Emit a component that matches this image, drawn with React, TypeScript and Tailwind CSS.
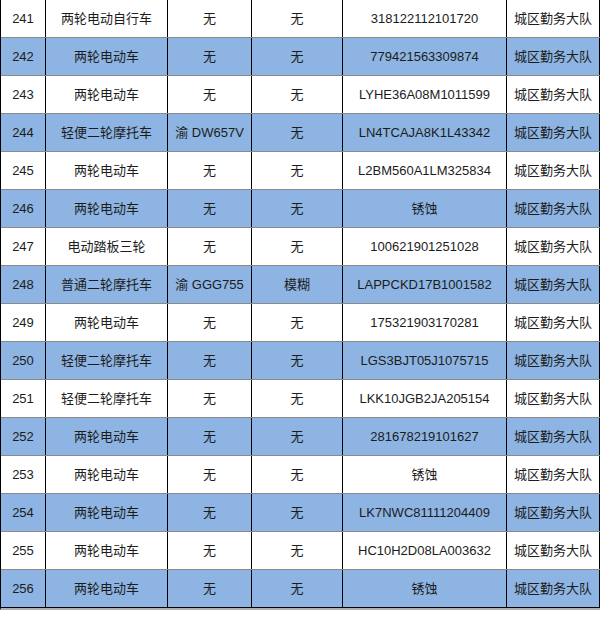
const rows: [string, string, string, string, string][] = [
  ["241", "两轮电动自行车", "无", "无", "318122112101720"],
  ["242", "两轮电动车", "无", "无", "779421563309874"],
  ["243", "两轮电动车", "无", "无", "LYHE36A08M1011599"],
  ["244", "轻便二轮摩托车", "渝 DW657V", "无", "LN4TCAJA8K1L43342"],
  ["245", "两轮电动车", "无", "无", "L2BM560A1LM325834"],
  ["246", "两轮电动车", "无", "无", "锈蚀"],
  ["247", "电动踏板三轮", "无", "无", "100621901251028"],
  ["248", "普通二轮摩托车", "渝 GGG755", "模糊", "LAPPCKD17B1001582"],
  ["249", "两轮电动车", "无", "无", "175321903170281"],
  ["250", "轻便二轮摩托车", "无", "无", "LGS3BJT05J1075715"],
  ["251", "轻便二轮摩托车", "无", "无", "LKK10JGB2JA205154"],
  ["252", "两轮电动车", "无", "无", "281678219101627"],
  ["253", "两轮电动车", "无", "无", "锈蚀"],
  ["254", "两轮电动车", "无", "无", "LK7NWC81111204409"],
  ["255", "两轮电动车", "无", "无", "HC10H2D08LA003632"],
  ["256", "两轮电动车", "无", "无", "锈蚀"],
];

function App() {
  return (
    <div className="w-[600px] h-[644px] bg-white font-['Liberation_Sans','Noto_Sans_CJK_SC',sans-serif] text-[13px] text-[#1c1c1c]">
      <div className="border-l border-black border-b-2 border-b-[#b0b0b0]">
        {rows.map((r, i) => (
          <div
            key={r[0]}
            className={`grid grid-cols-[45px_122px_84px_91px_164px_93px] h-[38px] border-b ${
              i === rows.length - 1 ? "border-black" : "border-[#8a8a8a]"
            } ${i % 2 === 1 ? "bg-[#8db4e2]" : "bg-white"}`}
          >
            {[r[0], r[1], r[2], r[3], r[4], "城区勤务大队"].map((c, j) => (
              <div key={j} className="flex items-center justify-center border-r border-black">
                {c}
              </div>
            ))}
          </div>
        ))}
      </div>
    </div>
  );
}

export default App;
